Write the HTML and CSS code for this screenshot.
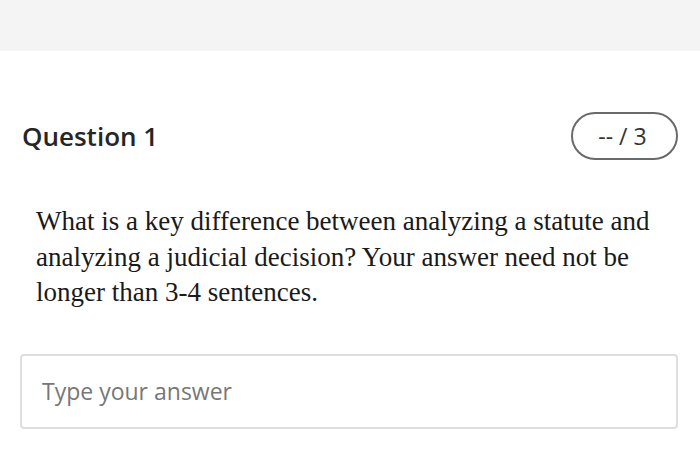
FILE: index.html
```html
<!DOCTYPE html>
<html>
<head>
<meta charset="utf-8">
<link rel="stylesheet" href="styles.css">
</head>
<body>
<div class="topbar"></div>
<main class="content">
  <div class="qhead">
    <h1 class="qtitle">Question 1</h1>
    <div class="score">-- / 3</div>
  </div>
  <p class="qtext">What is a key difference between analyzing a statute and analyzing a judicial decision? Your answer need not be longer than 3-4 sentences.</p>
  <div class="answer">Type your answer</div>
</main>
</body>
</html>
```
FILE: styles.css
```css
html, body {
  margin: 0;
  padding: 0;
  background: #ffffff;
}
body {
  width: 700px;
  height: 449px;
  overflow: hidden;
  font-family: "Open Sans", sans-serif;
}
.topbar {
  height: 51px;
  background: #f4f4f4;
}
.content {
  padding: 61px 22px 0 20px;
}
.qhead {
  display: flex;
  justify-content: space-between;
  align-items: center;
  height: 48px;
}
.qtitle {
  margin: 0 0 0 2px;
  font-size: 26px;
  font-weight: 600;
  color: #262626;
}
.score {
  box-sizing: border-box;
  width: 107px;
  height: 48px;
  border: 2px solid #6a6a6a;
  border-radius: 24px;
  display: flex;
  align-items: center;
  justify-content: center;
  padding-right: 4px;
  font-size: 23px;
  color: #333;
}
.qtext {
  margin: 44px 0 0 16px;
  font-family: "Liberation Serif", "Times New Roman", serif;
  font-size: 27px;
  line-height: 35.5px;
  color: #1a1a1a;
  width: 640px;
}
.answer {
  box-sizing: border-box;
  margin-top: 43px;
  height: 75px;
  border: 2px solid #dedede;
  border-radius: 4px;
  padding-left: 20px;
  display: flex;
  align-items: center;
  font-size: 23px;
  color: #777;
}
```
